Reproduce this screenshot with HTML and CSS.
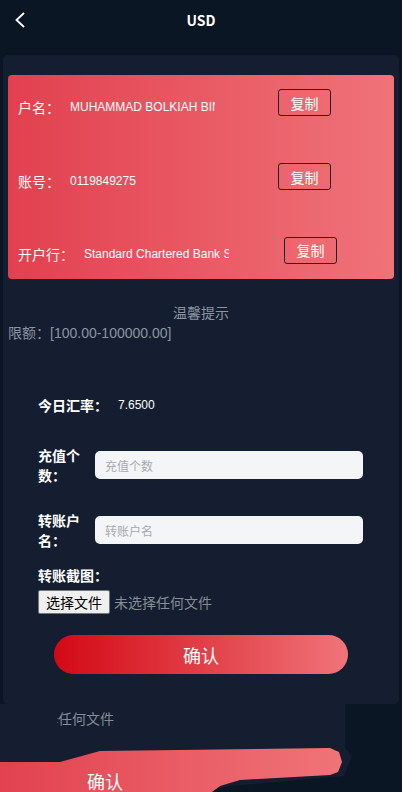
FILE: index.html
```html
<!DOCTYPE html>
<html lang="zh-CN">

<head>
    <meta charset="UTF-8">
    <meta name="viewport" content="width=device-width, initial-scale=1.0">
    <title>USD</title>
    <link rel="stylesheet" href="styles.css">
</head>

<body>
    <header class="top-bar">
        <a class="back" href="#">
            <svg width="12" height="16" viewBox="0 0 12 16"><polyline points="10,1 2.5,8 10,15" fill="none" stroke="#fff" stroke-width="1.8" /></svg>
        </a>
        <h1>USD</h1>
        <span></span>
    </header>

    <div class="panel">
        <div class="bank-card">
            <div class="bank-row">
                <span class="bank-label">户名：</span>
                <span class="bank-value">MUHAMMAD BOLKIAH BIN AWANG</span>
                <button type="button" class="copy-btn">复制</button>
            </div>
            <div class="bank-row">
                <span class="bank-label">账号：</span>
                <span class="bank-value">0119849275</span>
                <button type="button" class="copy-btn">复制</button>
            </div>
            <div class="bank-row">
                <span class="bank-label">开户行：</span>
                <span class="bank-value">Standard Chartered Bank Sdn Bhd</span>
                <button type="button" class="copy-btn copy-btn-bank">复制</button>
            </div>
        </div>

        <p class="tip-title">温馨提示</p>
        <p class="tip-text">限额：[100.00-100000.00]</p>

        <form class="deposit-form" onsubmit="return false;">
            <div class="rate-row">
                <span class="form-label">今日汇率：</span>
                <span class="rate-value">7.6500</span>
            </div>
            <div class="field-row">
                <label class="form-label field-label" for="amount">充值个数：</label>
                <input type="text" id="amount" placeholder="充值个数" />
            </div>
            <div class="field-row field-row-2">
                <label class="form-label field-label" for="payer">转账户名：</label>
                <input type="text" id="payer" placeholder="转账户名" />
            </div>
            <div class="form-label upload-label">转账截图：</div>
            <div class="file-pick">
                <button type="button" class="file-btn">选择文件</button>
                <span class="file-name">未选择任何文件</span>
            </div>
            <button type="submit" class="submit-btn">确认</button>
        </form>
    </div>

    <!-- 下方残影 -->
    <div class="ghost">
        <div class="ghost-panel"></div>
        <span class="ghost-file">择任何文件</span>
        <div class="ghost-red"></div>
        <span class="ghost-submit">确认</span>
        <span class="ghost-line">MUHAMMAD BOLKIAH BIN</span>
    </div>
</body>

</html>
```

FILE: styles.css
```css
html,
body {
    margin: 0;
    height: 792px;
    overflow: hidden;
}

body {
    position: relative;
    background-color: #0a1624;
    font-family: "Noto Sans CJK SC", sans-serif;
    color: #fff;
}

.top-bar {
    display: grid;
    grid-template-columns: 40px 1fr 40px;
    align-items: center;
    height: 40px;
}

.back {
    display: flex;
    padding-left: 14px;
}

.top-bar h1 {
    margin: 0;
    font-size: 14px;
    font-weight: 700;
    text-align: center;
}

.panel {
    margin: 15px 3px 0;
    padding: 20px 5px 30px;
    background-color: #141e30;
    border-radius: 5px;
}

.bank-card {
    display: flex;
    flex-direction: column;
    gap: 24px;
    height: 204px;
    box-sizing: border-box;
    padding: 7px 10px 0;
    border-radius: 4px;
    background: linear-gradient(90deg, #e2404f, #f07379);
}

.bank-row {
    display: flex;
    align-items: center;
    height: 50px;
}

.bank-label {
    font-size: 14px;
    line-height: 20px;
    margin-right: 10px;
}

.bank-value {
    width: 145px;
    overflow: hidden;
    white-space: nowrap;
    font-family: "Liberation Sans", Arial, sans-serif;
    font-size: 12px;
}

.copy-btn {
    width: 53px;
    height: 27px;
    margin-left: 63px;
    margin-bottom: 8px;
    padding: 0;
    background: transparent;
    border: 1px solid #1e1f2c;
    border-radius: 3px;
    color: #fff;
    font-family: "Noto Sans CJK SC", sans-serif;
    font-size: 14px;
}

.copy-btn-bank {
    margin-left: 55px;
}

.tip-title,
.tip-text {
    margin: 0;
    font-size: 14px;
    line-height: 20px;
    color: #8b95a1;
    font-family: "Liberation Sans", "Noto Sans CJK SC", sans-serif;
}

.tip-title {
    margin-top: 24px;
    text-align: center;
}

.deposit-form {
    padding-left: 30px;
}

.form-label {
    font-size: 14px;
    font-weight: 700;
    line-height: 20px;
    color: #fff;
}

.rate-row {
    display: flex;
    align-items: center;
    height: 20px;
    margin-top: 52px;
}

.rate-value {
    margin-left: 10px;
    font-family: "Liberation Sans", Arial, sans-serif;
    font-size: 12px;
}

.field-row {
    display: flex;
    align-items: center;
    height: 40px;
    margin-top: 30px;
}

.field-row-2 {
    margin-top: 25px;
}

.field-label {
    width: 45px;
    margin-right: 12px;
}

.field-row input {
    width: 268px;
    height: 28px;
    box-sizing: border-box;
    padding: 0 10px;
    border: none;
    border-radius: 5px;
    background-color: #f4f5f7;
    font-family: "Noto Sans CJK SC", sans-serif;
    font-size: 12px;
}

.field-row input::placeholder {
    color: #a8aab0;
}

.upload-label {
    margin-top: 15px;
}

.file-pick {
    display: flex;
    align-items: center;
    margin-top: 5px;
}

.file-btn {
    width: 72px;
    height: 24px;
    padding: 0;
    background-color: #efefef;
    border: 1px solid #767676;
    border-radius: 2px;
    color: #000;
    font-family: "Noto Sans CJK SC", sans-serif;
    font-size: 14px;
}

.file-name {
    margin-left: 4px;
    font-size: 14px;
    color: #848c96;
}

.submit-btn {
    display: block;
    width: 294px;
    height: 39px;
    margin: 21px 0 0 16px;
    border: none;
    border-radius: 20px;
    background: linear-gradient(90deg, #d30915, #f07479);
    color: #fff;
    font-family: "Noto Sans CJK SC", sans-serif;
    font-size: 18px;
}

/* 残影 */
.ghost {
    position: absolute;
    left: 0;
    top: 704px;
    width: 370px;
    height: 88px;
}

.ghost-panel {
    position: absolute;
    inset: 0;
    background-color: #141e30;
    clip-path: polygon(0 0, 345px 0, 345px 44px, 352px 52px, 344px 72px, 230px 82px, 200px 88px, 0 88px);
}

.ghost-file {
    position: absolute;
    left: 44px;
    top: 4px;
    font-size: 14px;
    line-height: 20px;
    color: #848c96;
    clip-path: inset(0 0 0 13px);
}

.ghost-red {
    position: absolute;
    left: 0;
    top: 44px;
    width: 345px;
    height: 44px;
    background: linear-gradient(90deg, #e2424f, #f07479);
    clip-path: polygon(0 14px, 60px 14px, 100px 3px, 330px 0, 339px 4px, 342px 14px, 338px 24px, 330px 27px, 240px 32px, 220px 38px, 212px 44px, 0 44px);
}

.ghost-submit {
    position: absolute;
    left: 87px;
    top: 65px;
    font-size: 18px;
    line-height: 24px;
}

.ghost-line {
    position: absolute;
    left: 15px;
    top: 86px;
    font-family: "Liberation Sans", Arial, sans-serif;
    font-size: 12px;
    line-height: 14px;
}
```
